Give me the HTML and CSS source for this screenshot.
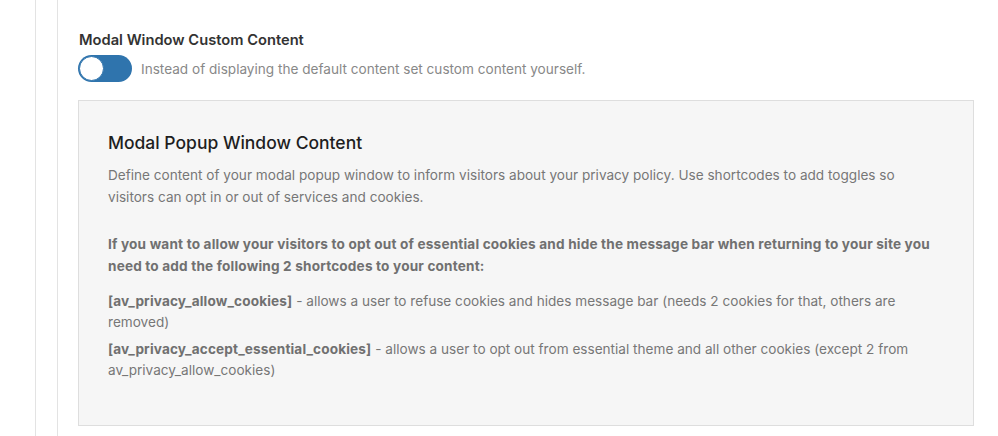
FILE: index.html
```html
<!DOCTYPE html>
<html>
<head>
<meta charset="utf-8">
<link rel="stylesheet" href="styles.css">
</head>
<body>
<div class="outer">
  <div class="inner">
    <div class="content">
      <h3 class="opt-title">Modal Window Custom Content</h3>
      <div class="toggle-row">
        <span class="toggle"><span class="knob"></span></span>
        <span class="toggle-desc">Instead of displaying the default content set custom content yourself.</span>
      </div>
      <div class="box">
        <h2 class="box-title">Modal Popup Window Content</h2>
        <p class="intro">Define content of your modal popup window to inform visitors about your privacy policy. Use shortcodes to add toggles so visitors can opt in or out of services and cookies.</p>
        <p class="strong">If you want to allow your visitors to opt out of essential cookies and hide the message bar when returning to your site you need to add the following 2 shortcodes to your content:</p>
        <p class="code"><strong>[av_privacy_allow_cookies]</strong> - allows a user to refuse cookies and hides message bar (needs 2 cookies for that, others are removed)</p>
        <p class="code"><strong>[av_privacy_accept_essential_cookies]</strong> - allows a user to opt out from essential theme and all other cookies (except 2 from av_privacy_allow_cookies)</p>
      </div>
    </div>
  </div>
</div>
</body>
</html>
```

FILE: styles.css
```css
html, body {
  margin: 0;
  padding: 0;
  background: #fff;
  height: 100%;
  overflow: hidden;
}
body {
  font-family: Inter, "Liberation Sans", Arial, sans-serif;
  color: #777;
}
.outer {
  margin-left: 35px;
  border-left: 1px solid #e3e3e3;
  padding-left: 21px;
  height: 100%;
}
.inner {
  border-left: 1px solid #e3e3e3;
  padding-left: 20px;
  height: 100%;
  padding-top: 31px;
  box-sizing: border-box;
}
.content {
  width: 896px;
}
.opt-title {
  margin: 0 0 0 1px;
  font-size: 14.7px;
  line-height: 18px;
  font-weight: 600;
  color: #333;
}
.toggle-row {
  display: flex;
  align-items: center;
  gap: 9px;
  margin-top: 6px;
}
.toggle {
  width: 54px;
  height: 27px;
  border-radius: 14px;
  background: #2f74ad;
  display: flex;
  align-items: center;
  box-sizing: border-box;
  padding-left: 1px;
}
.knob {
  width: 25px;
  height: 25px;
  border-radius: 50%;
  background: #fff;
  box-sizing: border-box;
  border: 1px solid #2f74ad;
}
.toggle-desc {
  font-size: 13.6px;
  color: #888;
}
.box {
  margin-top: 18px;
  background: #f6f6f6;
  border: 1px solid #dedede;
  padding: 31px 29px 31px;
  height: 326px;
  box-sizing: border-box;
}
.box-title {
  margin: 0 0 10px;
  font-size: 17.5px;
  line-height: 22px;
  font-weight: 500;
  color: #1e1e1e;
}
.box p {
  margin: 0;
  font-size: 13.6px;
  line-height: 22px;
  color: #777;
}
.box p.intro {
  margin-bottom: 25px;
}
.box p.strong {
  font-weight: 700;
  color: #707070;
  letter-spacing: 0.18px;
  margin-bottom: 14px;
}
.box p.code {
  line-height: 21px;
  margin-bottom: 6px;
}
.box p.code strong {
  font-weight: 700;
  color: #707070;
  letter-spacing: 0.15px;
}
```
